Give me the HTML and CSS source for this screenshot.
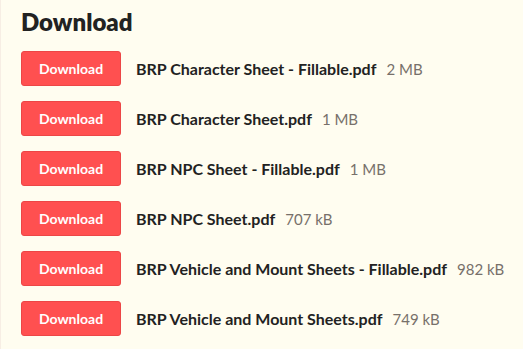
FILE: index.html
```html
<!DOCTYPE html>
<html lang="en">
<head>
  <meta charset="UTF-8">
  <title>Download</title>
  <link rel="stylesheet" href="styles.css">
</head>
<body>
  <section class="downloads">
    <h2>Download</h2>
    <ul class="file-list">
      <li class="file">
        <a class="btn" href="#">Download</a>
        <span class="file-name">BRP Character Sheet - Fillable.pdf</span>
        <span class="file-size">2 MB</span>
      </li>
      <li class="file">
        <a class="btn" href="#">Download</a>
        <span class="file-name">BRP Character Sheet.pdf</span>
        <span class="file-size">1 MB</span>
      </li>
      <li class="file">
        <a class="btn" href="#">Download</a>
        <span class="file-name">BRP NPC Sheet - Fillable.pdf</span>
        <span class="file-size">1 MB</span>
      </li>
      <li class="file">
        <a class="btn" href="#">Download</a>
        <span class="file-name">BRP NPC Sheet.pdf</span>
        <span class="file-size">707 kB</span>
      </li>
      <li class="file">
        <a class="btn" href="#">Download</a>
        <span class="file-name">BRP Vehicle and Mount Sheets - Fillable.pdf</span>
        <span class="file-size">982 kB</span>
      </li>
      <li class="file">
        <a class="btn" href="#">Download</a>
        <span class="file-name">BRP Vehicle and Mount Sheets.pdf</span>
        <span class="file-size">749 kB</span>
      </li>
    </ul>
  </section>
</body>
</html>
```

FILE: styles.css
```css
/* Global Styles */
body {
  font-family: Lato, "Open Sans", sans-serif;
  margin: 0;
  padding: 0;
  background-color: #fffdf0;
  color: #222;
}

.downloads {
  min-height: 349px;
  box-sizing: border-box;
  border-left: 1px solid #f7eee4;
  padding: 7px 20px;
}

.downloads h2 {
  margin: 0 0 14px 0;
  font-size: 24px;
  font-weight: 800;
  line-height: 30px;
}

/* File rows */
.file-list {
  list-style-type: none;
  margin: 0;
  padding: 0;
  display: flex;
  flex-direction: column;
  gap: 15px;
}

.file {
  display: flex;
  align-items: center;
  white-space: nowrap;
}

.btn {
  box-sizing: border-box;
  flex-shrink: 0;
  width: 100px;
  height: 35px;
  display: flex;
  align-items: center;
  justify-content: center;
  background-color: #ff5050;
  border: 1px solid #ec4646;
  border-radius: 3px;
  color: white;
  text-decoration: none;
  font-size: 14px;
  font-weight: 700;
  margin-right: 15px;
}

.file-name {
  flex-shrink: 0;
  font-size: 16px;
  font-weight: 700;
  margin-right: 10px;
}

.file-size {
  flex-shrink: 0;
  font-size: 15px;
  color: #77706a;
}
```
